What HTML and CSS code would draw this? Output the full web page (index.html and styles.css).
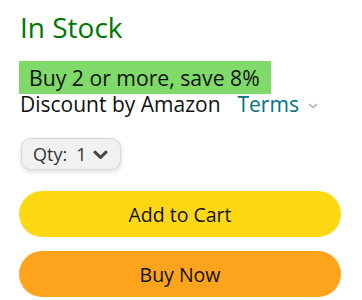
FILE: index.html
```html
<!DOCTYPE html>
<html>
<head>
<meta charset="utf-8">
<link rel="stylesheet" href="styles.css">
</head>
<body>
<div class="box">
  <div class="stock">In Stock</div>
  <div class="deal"><span class="badge">Buy 2 or more, save 8%</span></div>
  <div class="disc">Discount by Amazon <a class="terms">Terms</a><svg class="tchev" width="10" height="6" viewBox="0 0 10 6"><path d="M1 1 L5 4.5 L9 1" fill="none" stroke="#a8adad" stroke-width="1.5"/></svg></div>
  <div class="qty"><span>Qty:</span><span class="qn">1</span><svg class="qchev" width="15" height="10" viewBox="0 0 15 10"><path d="M2 2.2 L7.5 7.5 L13 2.2" fill="none" stroke="#444" stroke-width="3" stroke-linejoin="round" stroke-linecap="round"/></svg></div>
  <div class="btn cart">Add to Cart</div>
  <div class="btn buy">Buy Now</div>
</div>
</body>
</html>
```
FILE: styles.css
```css
html, body { margin: 0; padding: 0; background: #fff; }
body { font-family: "Open Sans", "Noto Sans", sans-serif; color: #0f1111; }
.box { padding: 8px 20px 0 19px; display: flex; flex-direction: column; align-items: flex-start; }
.stock { color: #007600; font-size: 28px; line-height: 38px; margin-left: 1px; }
.deal { margin-top: 15px; }
.badge { display: inline-block; background: #7fda69; font-size: 21.2px; line-height: 33px; padding: 0 11px 0 10px; color: #0f1111; }
.disc { font-size: 21px; line-height: 24px; margin-left: 1px; margin-top: -2px; display: flex; align-items: center; }
.terms { color: #007185; margin-left: 17px; }
.tchev { margin-left: 9px; margin-top: 3px; }
.qty { margin-top: 22px; margin-left: 2px; width: 100px; box-sizing: border-box; height: 32px; background: #f0f2f2; border: 1px solid #d5d9d9; border-radius: 10px; box-shadow: 0 2px 5px rgba(15,17,17,0.15); font-size: 18px; padding: 0 0 0 11px; display: flex; align-items: center; color: #333; }
.qn { margin-left: 9px; }
.qchev { margin-left: 7px; margin-top: 1px; }
.btn { align-self: stretch; margin-right: 1px; height: 46px; border-radius: 23px; display: flex; align-items: center; justify-content: center; font-size: 19.5px; color: #0f1111; }
.cart { background: #ffd814; margin-top: 21px; }
.buy { background: #ffa41c; margin-top: 14px; }
```
